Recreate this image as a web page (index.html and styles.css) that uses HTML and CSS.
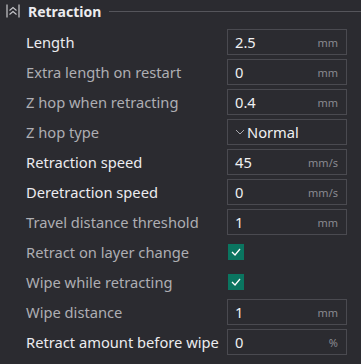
FILE: index.html
```html
<!DOCTYPE html>
<html>
<head>
    <title>Retraction</title>
    <link rel="stylesheet" href="styles.css">
</head>
<body>
    <div id="panel">
        <div class="group-title">
            <svg class="group-icon" width="14" height="16" viewBox="0 0 14 16">
                <path d="M1 1.5V14.5M13 1.5V14.5" stroke="#c8c8cc" stroke-width="1.2" fill="none"/>
                <path d="M3.5 7.5L7 4.5L10.5 7.5M3.5 11.5L7 8.5L10.5 11.5" stroke="#c8c8cc" stroke-width="1.1" fill="none"/>
            </svg>
            <span class="group-name">Retraction</span>
            <span class="group-line"></span>
        </div>

        <div class="row">
            <span class="label changed">Length</span>
            <div class="field"><span class="value">2.5</span><span class="unit">mm</span></div>
        </div>
        <div class="row">
            <span class="label">Extra length on restart</span>
            <div class="field"><span class="value">0</span><span class="unit">mm</span></div>
        </div>
        <div class="row">
            <span class="label">Z hop when retracting</span>
            <div class="field"><span class="value">0.4</span><span class="unit">mm</span></div>
        </div>
        <div class="row">
            <span class="label">Z hop type</span>
            <div class="field combo">
                <svg class="arrow" width="10" height="6" viewBox="0 0 10 6"><path d="M1 1L5 5L9 1" stroke="#a8a8ae" stroke-width="1" fill="none"/></svg>
                <span class="value">Normal</span>
            </div>
        </div>
        <div class="row">
            <span class="label changed">Retraction speed</span>
            <div class="field"><span class="value">45</span><span class="unit">mm/s</span></div>
        </div>
        <div class="row">
            <span class="label changed">Deretraction speed</span>
            <div class="field"><span class="value">0</span><span class="unit">mm/s</span></div>
        </div>
        <div class="row">
            <span class="label">Travel distance threshold</span>
            <div class="field"><span class="value">1</span><span class="unit">mm</span></div>
        </div>
        <div class="row">
            <span class="label">Retract on layer change</span>
            <div class="check">
                <svg width="10" height="8" viewBox="0 0 10 8"><path d="M1 4L4 7L9 1" stroke="#ffffff" stroke-width="1.3" fill="none"/></svg>
            </div>
        </div>
        <div class="row">
            <span class="label">Wipe while retracting</span>
            <div class="check">
                <svg width="10" height="8" viewBox="0 0 10 8"><path d="M1 4L4 7L9 1" stroke="#ffffff" stroke-width="1.3" fill="none"/></svg>
            </div>
        </div>
        <div class="row">
            <span class="label">Wipe distance</span>
            <div class="field"><span class="value">1</span><span class="unit">mm</span></div>
        </div>
        <div class="row">
            <span class="label changed">Retract amount before wipe</span>
            <div class="field"><span class="value">0</span><span class="unit">%</span></div>
        </div>
    </div>
</body>
</html>
```

FILE: styles.css
```css
body {
    margin: 0;
    background-color: #2b2b30;
    font-family: "Noto Sans", "Open Sans", sans-serif;
}

#panel {
    width: 361px;
    height: 364px;
}

.group-title {
    display: flex;
    align-items: center;
    height: 22px;
    padding-left: 6px;
    margin-bottom: 5px;
}

.group-icon {
    margin-right: 8px;
}

.group-name {
    font-size: 14px;
    font-weight: bold;
    color: #ececef;
}

.group-line {
    flex: 1;
    height: 1px;
    margin-left: 8px;
    background-color: #55555b;
}

.row {
    display: flex;
    align-items: center;
    height: 30px;
    padding-left: 26px;
}

.label {
    width: 201px;
    font-size: 14.7px;
    color: #aeaeb3;
    white-space: nowrap;
}

.label.changed {
    color: #ececef;
}

.field {
    display: flex;
    align-items: center;
    width: 103px;
    height: 24px;
    border: 1px solid #4a4a50;
    padding: 0 8px 0 7px;
}

.value {
    flex: 1;
    font-size: 14.7px;
    color: #f0f0f2;
}

.unit {
    font-size: 11px;
    color: #8a8a90;
}

.combo .arrow {
    margin-right: 2px;
}

.check {
    display: flex;
    align-items: center;
    justify-content: center;
    width: 16px;
    height: 16px;
    margin-left: 1px;
    background-color: #0a7560;
}
```
